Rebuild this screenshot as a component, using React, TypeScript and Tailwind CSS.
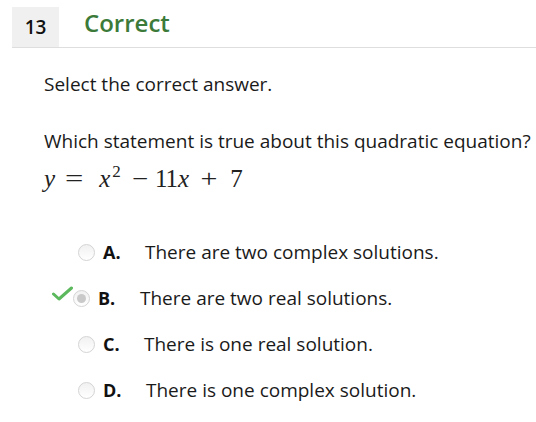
import React from "react";

type Option = {
  letter: string;
  text: string;
  picked?: boolean;
  shift: string;
  gap: string;
};

const options: Option[] = [
  { letter: "A.", text: "There are two complex solutions.", shift: "pl-[78px]", gap: "ml-[18px]" },
  { letter: "B.", text: "There are two real solutions.", picked: true, shift: "pl-[52px]", gap: "ml-[18px]" },
  { letter: "C.", text: "There is one real solution.", shift: "pl-[78px]", gap: "ml-[17px]" },
  { letter: "D.", text: "There is one complex solution.", shift: "pl-[78px]", gap: "ml-[19px]" },
];

function Radio({ picked }: { picked?: boolean }) {
  return (
    <span className="relative inline-flex h-[17px] w-[17px] items-center justify-center rounded-full border border-[#d4d4d4] bg-gradient-to-b from-[#f1f1f1] to-white">
      {picked && <span className="h-[9px] w-[9px] rounded-full bg-[#c9c9c9]" />}
    </span>
  );
}

function Check() {
  return (
    <svg width="21" height="16" viewBox="0 0 21 16" className="-mt-[10px]">
      <path d="M1.5 8 L7 13 L19.5 2" fill="none" stroke="#5cb85c" strokeWidth="3" strokeLinecap="round" strokeLinejoin="round" />
    </svg>
  );
}

export default function App() {
  return (
    <div className="h-[422px] w-[536px] overflow-hidden bg-white text-[#1a1a1a]" style={{ fontFamily: '"Open Sans", sans-serif' }}>
      <div className="ml-[12px] mt-[7px] flex h-[41px] items-stretch border-b border-[#dedede]">
        <div className="flex w-[47px] items-center justify-center bg-[#f0f0f0] text-[19px] font-semibold text-[#111]">13</div>
        <div className="flex items-center pl-[25px] pb-[8px] text-[24px] font-semibold text-[#3c7a3a]">Correct</div>
      </div>

      <div className="pl-[44px]">
        <p className="mt-[24px] text-[19px] leading-[24px]">Select the correct answer.</p>
        <p className="mt-[33px] whitespace-nowrap text-[19px] leading-[24px]">Which statement is true about this quadratic equation?</p>
        <div className="mt-[11px] flex items-baseline whitespace-nowrap text-[25px] leading-[30px] text-[#222]" style={{ fontFamily: '"Liberation Serif", serif' }}>
          <span className="italic">y</span>
          <span className="ml-[12px] inline-block scale-x-[1.3]">=</span>
          <span className="ml-[18px] italic">x</span>
          <span className="relative -top-[10px] ml-[2px] text-[17px]">2</span>
          <span className="ml-[12px] inline-block scale-x-[1.15]">−</span>
          <span className="ml-[8px] tracking-[-1px]">11</span>
          <span className="ml-[1px] italic">x</span>
          <span className="ml-[13px] inline-block scale-x-[1.2]">+</span>
          <span className="ml-[14px]">7</span>
        </div>
      </div>

      <div className="mt-[43px] flex flex-col gap-[21px]">
        {options.map((o) => (
          <div key={o.letter} className={`flex h-[25px] items-center ${o.shift}`}>
            {o.picked && <Check />}
            <Radio picked={o.picked} />
            <span className="ml-[8px] w-[24px] text-[18px] font-bold text-[#111]">{o.letter}</span>
            <span className={`${o.gap} text-[19px]`}>{o.text}</span>
          </div>
        ))}
      </div>
    </div>
  );
}
